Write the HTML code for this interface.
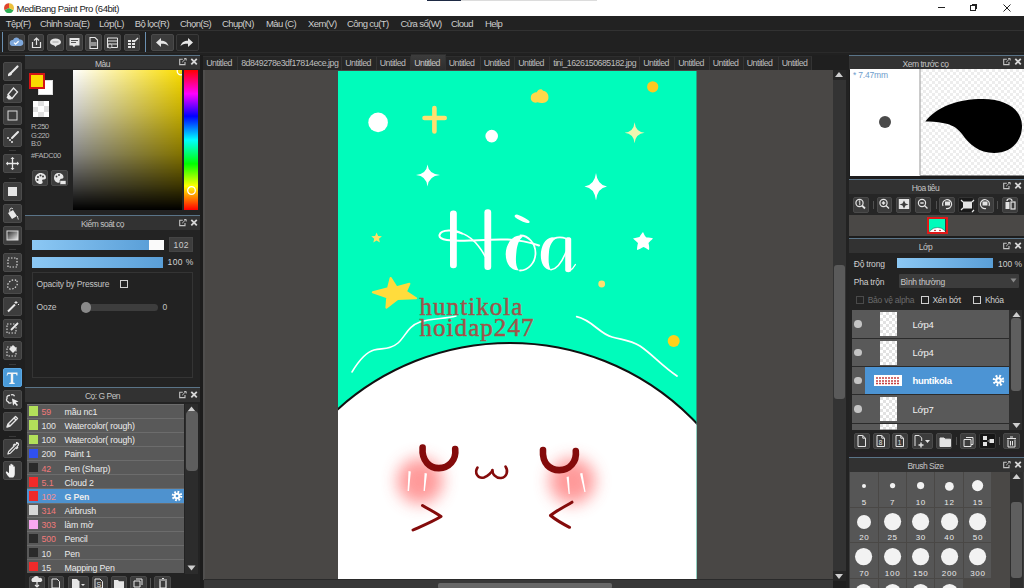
<!DOCTYPE html>
<html><head><meta charset="utf-8">
<style>
*{margin:0;padding:0;box-sizing:border-box}
html,body{width:1024px;height:588px;overflow:hidden;background:#1e1e1e;font-family:"Liberation Sans",sans-serif}
.a{position:absolute}
.t{position:absolute;white-space:nowrap;line-height:1}
svg{position:absolute;overflow:visible}
.btn{position:absolute;background:#3c3c3c;border:1px solid #4a4a4a;border-radius:2px}
.tool{position:absolute;left:3px;width:19px;height:19px;background:#3d3d3d;border:1px solid #4b4b4b;border-radius:2px}
.sep{position:absolute;left:9px;width:7px;height:1px;background:#3a3a3a}
.ph{position:absolute;background:#323232;height:15px;border-top:1px solid #5a7488}
.ph .t{color:#bdbdbd;font-size:8.5px;top:3.5px;letter-spacing:-0.3px}
.pb{position:absolute;background:#222}
</style></head><body>
<div class="a" style="left:0;top:0;width:1024px;height:16px;background:#fff">
<svg style="left:3px;top:2px" width="12" height="12" viewBox="0 0 12 12">
<circle cx="6" cy="6" r="5.2" fill="#f3f3f3"/>
<path d="M6 1.2 A4.8 4.8 0 0 0 1.6 8.2 L6 6Z" fill="#e0452d"/>
<path d="M1.6 8.2 A4.8 4.8 0 0 0 10.4 8.2 L6 6Z" fill="#2fae55"/>
<path d="M10.4 8.2 A4.8 4.8 0 0 0 6 1.2 L6 6Z" fill="#eec13a"/>
</svg>
<div class="t" style="left:16.5px;top:3.5px;font-size:9.5px;color:#1a1a1a;letter-spacing:-0.45px">MediBang Paint Pro (64bit)</div>
<div class="a" style="left:426.5px;top:0;width:35px;height:1px;background:#1e2a44"></div><div class="a" style="left:461px;top:0;width:136px;height:1px;background:#dcdcdc"></div><div class="a" style="left:938px;top:7px;width:7px;height:1px;background:#222"></div>
<div class="a" style="left:970px;top:5px;width:5.5px;height:5.5px;border:1px solid #222"></div>
<div class="a" style="left:971.5px;top:3.5px;width:5.5px;height:5.5px;border-top:1px solid #222;border-right:1px solid #222"></div>
<svg style="left:1002.5px;top:3.5px" width="8" height="8" viewBox="0 0 8 8"><path d="M0.5 0.5L7.5 7.5M7.5 0.5L0.5 7.5" stroke="#222" stroke-width="1"/></svg>
</div>
<div class="a" style="left:0;top:16px;width:1024px;height:14.5px;background:#222"></div>
<div class="t" style="left:5.75px;top:19px;color:#cdcdcd;font-size:9.5px;letter-spacing:-0.6px">Tệp(F)</div>
<div class="t" style="left:40.0px;top:19px;color:#cdcdcd;font-size:9.5px;letter-spacing:-0.6px">Chỉnh sửa(E)</div>
<div class="t" style="left:99.0px;top:19px;color:#cdcdcd;font-size:9.5px;letter-spacing:-0.6px">Lớp(L)</div>
<div class="t" style="left:134.75px;top:19px;color:#cdcdcd;font-size:9.5px;letter-spacing:-0.6px">Bộ lọc(R)</div>
<div class="t" style="left:180.0px;top:19px;color:#cdcdcd;font-size:9.5px;letter-spacing:-0.6px">Chọn(S)</div>
<div class="t" style="left:222.0px;top:19px;color:#cdcdcd;font-size:9.5px;letter-spacing:-0.6px">Chụp(N)</div>
<div class="t" style="left:266.0px;top:19px;color:#cdcdcd;font-size:9.5px;letter-spacing:-0.6px">Màu (C)</div>
<div class="t" style="left:308.0px;top:19px;color:#cdcdcd;font-size:9.5px;letter-spacing:-0.6px">Xem(V)</div>
<div class="t" style="left:347.0px;top:19px;color:#cdcdcd;font-size:9.5px;letter-spacing:-0.6px">Công cụ(T)</div>
<div class="t" style="left:400.5px;top:19px;color:#cdcdcd;font-size:9.5px;letter-spacing:-0.6px">Cửa sổ(W)</div>
<div class="t" style="left:451.0px;top:19px;color:#cdcdcd;font-size:9.5px;letter-spacing:-0.6px">Cloud</div>
<div class="t" style="left:485.0px;top:19px;color:#cdcdcd;font-size:9.5px;letter-spacing:-0.6px">Help</div>
<div class="a" style="left:0;top:30px;width:1024px;height:25px;background:#212121;border-top:1px solid #323232"></div><div class="a" style="left:0;top:51.5px;width:1024px;height:1px;background:#2a2a2a"></div>
<div class="a" style="left:2px;top:32px;width:1px;height:20px;background:#6a8fb0"></div>
<div class="a" style="left:145px;top:32px;width:1px;height:20px;background:#6a8fb0"></div>
<div class="btn" style="left:8.3px;top:33.7px;width:16.5px;height:17px"></div><svg style="left:9.3px;top:34.7px" width="15" height="15" viewBox="0 0 15 15"><path d="M3.5 11 a3 3 0 0 1 0.5-6 a3.5 3.5 0 0 1 6.5-0.5 a2.8 2.8 0 0 1 1 6.5z" fill="#7fa9dd"/><path d="M5 7.6l1.6 1.6 3-3" stroke="#fff" stroke-width="1.3" fill="none"/></svg>
<div class="btn" style="left:27.8px;top:33.7px;width:16.5px;height:17px"></div><svg style="left:28.8px;top:34.7px" width="15" height="15" viewBox="0 0 15 15"><path d="M3.5 7v5.5h8V7" stroke="#e6e6e6" stroke-width="1.2" fill="none"/><path d="M7.5 10V3M5 5.5l2.5-2.5 2.5 2.5" stroke="#e6e6e6" stroke-width="1.2" fill="none"/></svg>
<div class="btn" style="left:47px;top:33.7px;width:16.5px;height:17px"></div><svg style="left:48px;top:34.7px" width="15" height="15" viewBox="0 0 15 15"><ellipse cx="7.5" cy="7" rx="5.5" ry="3.6" fill="#e6e6e6"/><path d="M6 10l1.5 2 1.5-2z" fill="#e6e6e6"/><path d="M4.5 7h6" stroke="#777" stroke-width="0.6"/></svg>
<div class="btn" style="left:66px;top:33.7px;width:16.5px;height:17px"></div><svg style="left:67px;top:34.7px" width="15" height="15" viewBox="0 0 15 15"><path d="M2.5 3h10v7.5h-4l-1.5 1.5-1.5-1.5h-3z" fill="#e6e6e6"/><path d="M4 5.5h7M4 7.5h5" stroke="#555" stroke-width="1"/></svg>
<div class="btn" style="left:85px;top:33.7px;width:16.5px;height:17px"></div><svg style="left:86px;top:34.7px" width="15" height="15" viewBox="0 0 15 15"><path d="M4 2.5h5l2.5 2.5v8.5h-7.5z" stroke="#e6e6e6" stroke-width="1.1" fill="none"/><path d="M5 8h5.5M5 10h5.5" stroke="#e6e6e6" stroke-width="1.2"/></svg>
<div class="btn" style="left:104.1px;top:33.7px;width:16.5px;height:17px"></div><svg style="left:105.1px;top:34.7px" width="15" height="15" viewBox="0 0 15 15"><path d="M2.5 3h10v9.5h-10z" stroke="#e6e6e6" stroke-width="1" fill="none"/><path d="M2.5 6h10M2.5 9h10" stroke="#e6e6e6" stroke-width="1"/><circle cx="5" cy="11" r="2" fill="#3c3c3c" stroke="#e6e6e6" stroke-width="0.8"/></svg>
<div class="btn" style="left:123.8px;top:33.7px;width:16.5px;height:17px"></div><svg style="left:124.8px;top:34.7px" width="15" height="15" viewBox="0 0 15 15"><path d="M3 5h3v2h-3zM7 5h3v2h-3zM3 8h3v2h-3zM7 8h3v2h-3zM3 11h3v2h-3zM7 11h3v2h-3z" fill="#e6e6e6"/><path d="M9 7l4-4" stroke="#e6e6e6" stroke-width="1.2"/></svg>
<div class="btn" style="left:151px;top:33.7px;width:22.5px;height:17px"></div><svg style="left:151px;top:33.7px" width="22" height="17" viewBox="0 0 22 17"><path d="M5 8.5l5-4.5v2.8c4 0 6.5 1.5 7.5 5.5c-1.5-2-3.5-2.5-7.5-2.5v3.2z" fill="#e6e6e6"/></svg>
<div class="btn" style="left:175.8px;top:33.7px;width:23px;height:17px;background:#262626;border-color:#3a3a3a"></div><svg style="left:176px;top:33.7px" width="22" height="17" viewBox="0 0 22 17"><path d="M17 8.5l-5-4.5v2.8c-4 0-6.5 1.5-7.5 5.5c1.5-2 3.5-2.5 7.5-2.5v3.2z" fill="#e6e6e6"/></svg>
<div class="a" style="left:0;top:55px;width:25px;height:533px;background:#1f1f1f;border-top:1px solid #3a3a3a"></div>
<div class="tool" style="top:62px"></div><svg style="left:4px;top:63px" width="17" height="17" viewBox="0 0 17 17"><path d="M13.5 3.5L7 10" stroke="#e8e8e8" stroke-width="2.2" stroke-linecap="round"/><path d="M4 11.5c1-2 2.5-2.8 3.8-1.6c0.8 1.3-0.6 3-3.8 3.3z" fill="#e8e8e8"/></svg>
<div class="tool" style="top:84px"></div><svg style="left:4px;top:85px" width="17" height="17" viewBox="0 0 17 17"><path d="M9.5 3l4 4-5.5 6.5-4-4z" fill="none" stroke="#e8e8e8" stroke-width="1.3"/><path d="M4 9.5l4 4-1 1h-2.5l-2-2z" fill="#e8e8e8"/></svg>
<div class="tool" style="top:106px"></div><svg style="left:4px;top:107px" width="17" height="17" viewBox="0 0 17 17"><rect x="4" y="4" width="9" height="9" fill="none" stroke="#dcdcdc" stroke-width="1"/></svg>
<div class="tool" style="top:128px"></div><svg style="left:4px;top:129px" width="17" height="17" viewBox="0 0 17 17"><path d="M14 3L8 9" stroke="#e8e8e8" stroke-width="2" stroke-linecap="round"/><circle cx="4" cy="9" r="1" fill="#e8e8e8"/><circle cx="6" cy="11" r="1" fill="#e8e8e8"/><circle cx="8" cy="13" r="1" fill="#e8e8e8"/></svg>
<div class="tool" style="top:154px"></div><svg style="left:4px;top:155px" width="17" height="17" viewBox="0 0 17 17"><path d="M8.5 2.5v12M2.5 8.5h12" stroke="#e8e8e8" stroke-width="1.3"/><path d="M8.5 2l-2 2h4zM8.5 15l-2-2h4zM2 8.5l2-2v4zM15 8.5l-2-2v4z" fill="#e8e8e8"/></svg>
<div class="tool" style="top:182px"></div><svg style="left:4px;top:183px" width="17" height="17" viewBox="0 0 17 17"><rect x="4" y="4" width="9" height="9" fill="#e6e6e6"/></svg>
<div class="tool" style="top:204px"></div><svg style="left:4px;top:205px" width="17" height="17" viewBox="0 0 17 17"><path d="M4 8l5-3 4 6-5 3z" fill="#e8e8e8"/><path d="M6 7c-1-3 1-5 3-3" stroke="#e8e8e8" stroke-width="1" fill="none"/><path d="M13.5 11c0 2 1 3 0.8 3.5" stroke="#e8e8e8" stroke-width="1"/></svg>
<div class="tool" style="top:226px"></div><svg style="left:4px;top:227px" width="17" height="17" viewBox="0 0 17 17"><defs><linearGradient id="gg" x1="0" y1="0" x2="1" y2="1"><stop offset="0" stop-color="#222"/><stop offset="1" stop-color="#eee"/></linearGradient></defs><rect x="3" y="4" width="11" height="9" fill="url(#gg)" stroke="#ddd" stroke-width="1"/></svg>
<div class="tool" style="top:253px"></div><svg style="left:4px;top:254px" width="17" height="17" viewBox="0 0 17 17"><rect x="4" y="4" width="9" height="9" fill="none" stroke="#dcdcdc" stroke-width="1.2" stroke-dasharray="1.5 1.5"/></svg>
<div class="tool" style="top:275px"></div><svg style="left:4px;top:276px" width="17" height="17" viewBox="0 0 17 17"><ellipse cx="8.5" cy="8.5" rx="5.5" ry="4" transform="rotate(-40 8.5 8.5)" fill="none" stroke="#dcdcdc" stroke-width="1.2" stroke-dasharray="1.5 1.5"/></svg>
<div class="tool" style="top:297px"></div><svg style="left:4px;top:298px" width="17" height="17" viewBox="0 0 17 17"><path d="M4 13.5l7-7" stroke="#e8e8e8" stroke-width="2"/><path d="M12 3v3M10.5 4.5h3M14 6l1 1" stroke="#e8e8e8" stroke-width="1"/></svg>
<div class="tool" style="top:319px"></div><svg style="left:4px;top:320px" width="17" height="17" viewBox="0 0 17 17"><rect x="3" y="4" width="9" height="9" fill="none" stroke="#dcdcdc" stroke-width="1.1" stroke-dasharray="1.5 1.5"/><path d="M14 3L7 10" stroke="#e8e8e8" stroke-width="1.8"/></svg>
<div class="tool" style="top:341px"></div><svg style="left:4px;top:342px" width="17" height="17" viewBox="0 0 17 17"><rect x="3" y="5" width="9" height="9" fill="none" stroke="#dcdcdc" stroke-width="1.1" stroke-dasharray="1.5 1.5"/><path d="M9 3l4 4-4 4-4-4z" fill="#e8e8e8"/></svg>
<div class="tool" style="top:368px;background:#4a9ad8;border-color:#5aa8e4"></div><svg style="left:4px;top:369px" width="17" height="17" viewBox="0 0 17 17"><path d="M3.5 3.5h10v3h-1l-0.5-1.5h-2.8v8.5l1.5 0.5v1h-5.4v-1l1.5-0.5v-8.5h-2.8l-0.5 1.5h-1z" fill="#f4f4f4"/></svg>
<div class="tool" style="top:390px"></div><svg style="left:4px;top:391px" width="17" height="17" viewBox="0 0 17 17"><path d="M6 4.5c-2-0.5-3.5 1-3 3c-1 1-0.5 3 1 3.2c0.5 1.5 2.5 1.8 3.5 0.8" stroke="#e4e4e4" stroke-width="1.3" fill="none"/><path d="M7 3.8c1.5-0.5 3 0 3.5 1.5" stroke="#e4e4e4" stroke-width="1.3" fill="none"/><path d="M8 7.5l6.5 3-2.8 0.9 2.3 2.6-1.2 1-2.2-2.6-1.6 2.3z" fill="#f0f0f0"/></svg>
<div class="tool" style="top:412px"></div><svg style="left:4px;top:413px" width="17" height="17" viewBox="0 0 17 17"><path d="M11.5 3.5l2 2-7.5 7.5-3 1 1-3z" fill="none" stroke="#e8e8e8" stroke-width="1.4" stroke-linejoin="round"/><path d="M3.5 13.5l1-3 2 2z" fill="#e8e8e8"/><path d="M10 5l2 2" stroke="#e8e8e8" stroke-width="1.2"/></svg>
<div class="tool" style="top:439px"></div><svg style="left:4px;top:440px" width="17" height="17" viewBox="0 0 17 17"><path d="M12.5 2.5c1 0 2 1 2 2c0 0.8-0.5 1.2-1 1.6l-0.6 0.6 0.8 0.8-1 1-0.8-0.8-5.5 5.5-2.5 0.8 0.8-2.5 5.5-5.5-0.8-0.8 1-1 0.8 0.8 0.6-0.6c0.4-0.5 0.8-1 1.6-1z" fill="none" stroke="#e8e8e8" stroke-width="1.2" stroke-linejoin="round"/></svg>
<div class="tool" style="top:461px"></div><svg style="left:4px;top:462px" width="17" height="17" viewBox="0 0 17 17"><path d="M5.5 15.5c-1.2-1.2-3.2-3.6-3.6-4.8c-0.3-0.9 0.6-1.5 1.4-0.9l1.7 1.5v-7.3c0-1 1.4-1 1.4 0v5.2v-6.7c0-1 1.5-1 1.5 0v6.5v-5.8c0-1 1.5-1 1.5 0v6v-4.2c0-1 1.4-1 1.4 0v6.6c0 2.2-0.7 3.2-1.6 3.9z" fill="#f2f2f2"/></svg>
<div class="sep" style="top:150px"></div>
<div class="sep" style="top:177.5px"></div>
<div class="sep" style="top:248.5px"></div>
<div class="sep" style="top:363.8px"></div>
<div class="sep" style="top:435.5px"></div>
<div class="a" style="left:25px;top:55px;width:178px;height:533px;background:#1d1d1d"></div>
<div class="ph" style="left:25px;top:54.5px;width:175px"></div><div class="t" style="left:25px;width:155px;text-align:center;top:59.5px;color:#c4c4c4;font-size:8.5px;letter-spacing:-0.5px">Màu</div><svg style="left:178.5px;top:58.0px" width="18" height="8" viewBox="0 0 18 8"><path d="M3.8 1.3h-3.1v5.3h5.3v-2.6" stroke="#c4c4c4" stroke-width="1.1" fill="none"/><path d="M3.2 4.2l3.8-3.8M5.2 0.5h2v2" stroke="#c4c4c4" stroke-width="1" fill="none"/><path d="M12.3 0.8l5.5 5.5M17.8 0.8l-5.5 5.5" stroke="#d8d8d8" stroke-width="1.8"/></svg>
<div class="a" style="left:25px;top:69px;width:175px;height:146px;background:#232323"></div>
<div class="a" style="left:38px;top:80px;width:15px;height:15px;background:#fff;border:1px solid #ddd"></div><div class="a" style="left:29px;top:73px;width:16px;height:16px;background:#fadc00;border:2px solid #d41515"></div>
<svg style="left:33px;top:101px" width="16" height="16" viewBox="0 0 16 16"><rect width="16" height="16" fill="#fff"/><path d="M5 0h6v5h5v6h-5v5h-6v-5h-5v-5h5z" fill="#e0e0e0"/><rect x="5" y="5" width="6" height="6" fill="#fff"/></svg>
<div class="t" style="left:31px;top:123px;color:#b8b8b8;font-size:7.5px;line-height:8.5px;letter-spacing:-0.5px;white-space:pre">R:250
G:220
B:0</div>
<div class="t" style="left:31px;top:151.5px;color:#b8b8b8;font-size:7.5px;letter-spacing:-0.4px">#FADC00</div>
<div class="btn" style="left:32px;top:170px;width:16px;height:16px"></div><div class="btn" style="left:51px;top:170px;width:16.5px;height:16px"></div><svg style="left:33px;top:171px" width="15" height="15" viewBox="0 0 15 15"><path d="M7.5 2c3.5 0 5.5 2.2 5.5 4.5c0 2-2 2-3 2s-1.2 1-0.5 2s-0.5 2.5-2 2.5c-3 0-5.5-2.5-5.5-5.5s2.5-5.5 5.5-5.5z" fill="#e8e8e8"/><circle cx="5" cy="6" r="1" fill="#3c3c3c"/><circle cx="7.5" cy="4.5" r="1" fill="#3c3c3c"/><circle cx="10" cy="5.5" r="1" fill="#3c3c3c"/><circle cx="4.5" cy="9" r="1" fill="#3c3c3c"/></svg><svg style="left:52px;top:171px" width="15" height="15" viewBox="0 0 15 15"><path d="M6.5 2c3 0 5 2 5 4c0 1.5-1.5 1.8-2.5 1.8s-1 1-0.5 1.8s-0.5 2.2-1.8 2.2c-2.7 0-4.7-2.2-4.7-5s2-4.8 4.5-4.8z" fill="#e8e8e8"/><circle cx="4.5" cy="5.5" r="0.9" fill="#3c3c3c"/><circle cx="7" cy="4" r="0.9" fill="#3c3c3c"/><rect x="8" y="9.5" width="6" height="4" fill="#e8e8e8" stroke="#3c3c3c" stroke-width="0.6"/></svg>
<div class="a" style="left:73px;top:69.5px;width:108.5px;height:140.5px;background:linear-gradient(to bottom,rgba(0,0,0,0) 0%,rgba(0,0,0,0.22) 30%,rgba(0,0,0,0.48) 60%,rgba(0,0,0,0.75) 82%,#000 100%),linear-gradient(to right,#fff,#fadc00)"></div>
<div class="a" style="left:73px;top:69.5px;width:108.5px;height:140.5px;overflow:hidden"><svg style="left:103px;top:-3.5px" width="10" height="10" viewBox="0 0 10 10"><circle cx="5" cy="5" r="3.8" fill="none" stroke="#fff" stroke-width="1.3"/></svg></div>
<div class="a" style="left:183.7px;top:69.5px;width:14.5px;height:140.5px;background:linear-gradient(to bottom,#f00 0%,#f0f 17%,#00f 33%,#0ff 50%,#0f0 67%,#ff0 83%,#f00 100%)"></div>
<svg style="left:185.5px;top:185px" width="11" height="11" viewBox="0 0 11 11"><circle cx="5.5" cy="5.5" r="3.8" fill="none" stroke="#fff" stroke-width="1.3"/></svg>
<div class="ph" style="left:25px;top:215px;width:175px"></div><div class="t" style="left:25px;width:155px;text-align:center;top:220px;color:#c4c4c4;font-size:8.5px;letter-spacing:-0.5px">Kiểm soát cọ</div><svg style="left:178.5px;top:218.5px" width="18" height="8" viewBox="0 0 18 8"><path d="M3.8 1.3h-3.1v5.3h5.3v-2.6" stroke="#c4c4c4" stroke-width="1.1" fill="none"/><path d="M3.2 4.2l3.8-3.8M5.2 0.5h2v2" stroke="#c4c4c4" stroke-width="1" fill="none"/><path d="M12.3 0.8l5.5 5.5M17.8 0.8l-5.5 5.5" stroke="#d8d8d8" stroke-width="1.8"/></svg>
<div class="a" style="left:25px;top:230px;width:175px;height:157px;background:#232323"></div>
<div class="a" style="left:31.5px;top:239.5px;width:118px;height:10.5px;background:linear-gradient(to right,#8cc8f4,#5a9fd8)"></div><div class="a" style="left:149px;top:239.5px;width:14.5px;height:10.5px;background:#fafafa"></div><div class="a" style="left:169.3px;top:237.4px;width:23.7px;height:14.3px;background:#3d3d3d;border:1px solid #444"></div><div class="t" style="left:173.5px;top:241px;color:#cccccc;font-size:8.5px;letter-spacing:0.45px">102</div>
<div class="a" style="left:31.5px;top:256.5px;width:131.5px;height:11.5px;background:linear-gradient(to right,#8cc8f4,#5a9fd8)"></div><div class="t" style="left:167.5px;top:258px;color:#d4d4d4;font-size:8.5px;letter-spacing:0.4px">100 %</div>
<div class="a" style="left:31.5px;top:272px;width:161px;height:106px;border:1px solid #343434;background:#222"></div>
<div class="t" style="left:36.5px;top:279.5px;color:#c4c4c4;font-size:8.5px;letter-spacing:-0.2px">Opacity by Pressure</div><div class="a" style="left:119.5px;top:279.5px;width:8px;height:8.5px;border:1px solid #cfcfcf"></div>
<div class="t" style="left:36.5px;top:303px;color:#c4c4c4;font-size:8.5px;letter-spacing:-0.1px">Ooze</div><div class="a" style="left:81px;top:303.8px;width:77px;height:7.5px;border-radius:4px;background:#3d3d3d"></div><div class="a" style="left:80.5px;top:302px;width:10.5px;height:10.5px;border-radius:50%;background:#8a8a8a"></div><div class="t" style="left:162.5px;top:303px;color:#c4c4c4;font-size:8.5px">0</div>
<div class="ph" style="left:25px;top:387px;width:175px"></div><div class="t" style="left:25px;width:155px;text-align:center;top:392px;color:#c4c4c4;font-size:8.5px;letter-spacing:-0.5px">Cọ: G Pen</div><svg style="left:178.5px;top:390.5px" width="18" height="8" viewBox="0 0 18 8"><path d="M3.8 1.3h-3.1v5.3h5.3v-2.6" stroke="#c4c4c4" stroke-width="1.1" fill="none"/><path d="M3.2 4.2l3.8-3.8M5.2 0.5h2v2" stroke="#c4c4c4" stroke-width="1" fill="none"/><path d="M12.3 0.8l5.5 5.5M17.8 0.8l-5.5 5.5" stroke="#d8d8d8" stroke-width="1.8"/></svg>
<div class="a" style="left:25px;top:402px;width:175px;height:186px;background:#232323"></div>
<div class="a" style="left:26.5px;top:403.50px;width:157.7px;height:14.15px;background:#595959;border-top:1px solid #6c6c6c"></div><div class="a" style="left:29px;top:406.30px;width:9.2px;height:9.5px;background:#b2e05a"></div><div class="t" style="left:41.5px;top:408.00px;color:#f07a7a;font-size:8.8px;letter-spacing:-0.1px">59</div><div class="t" style="left:64.5px;top:408.00px;color:#ececec;font-size:8.8px;font-weight:normal;letter-spacing:-0.15px">mầu nc1</div>
<div class="a" style="left:26.5px;top:417.65px;width:157.7px;height:14.15px;background:#595959;border-top:1px solid #6c6c6c"></div><div class="a" style="left:29px;top:420.45px;width:9.2px;height:9.5px;background:#b2e05a"></div><div class="t" style="left:41.5px;top:422.15px;color:#e4e4e4;font-size:8.8px;letter-spacing:-0.1px">100</div><div class="t" style="left:64.5px;top:422.15px;color:#ececec;font-size:8.8px;font-weight:normal;letter-spacing:-0.15px">Watercolor( rough)</div>
<div class="a" style="left:26.5px;top:431.80px;width:157.7px;height:14.15px;background:#595959;border-top:1px solid #6c6c6c"></div><div class="a" style="left:29px;top:434.60px;width:9.2px;height:9.5px;background:#b2e05a"></div><div class="t" style="left:41.5px;top:436.30px;color:#e4e4e4;font-size:8.8px;letter-spacing:-0.1px">100</div><div class="t" style="left:64.5px;top:436.30px;color:#ececec;font-size:8.8px;font-weight:normal;letter-spacing:-0.15px">Watercolor( rough)</div>
<div class="a" style="left:26.5px;top:445.95px;width:157.7px;height:14.15px;background:#595959;border-top:1px solid #6c6c6c"></div><div class="a" style="left:29px;top:448.75px;width:9.2px;height:9.5px;background:#3050f0"></div><div class="t" style="left:41.5px;top:450.45px;color:#e4e4e4;font-size:8.8px;letter-spacing:-0.1px">200</div><div class="t" style="left:64.5px;top:450.45px;color:#ececec;font-size:8.8px;font-weight:normal;letter-spacing:-0.15px">Paint 1</div>
<div class="a" style="left:26.5px;top:460.10px;width:157.7px;height:14.15px;background:#595959;border-top:1px solid #6c6c6c"></div><div class="a" style="left:29px;top:462.90px;width:9.2px;height:9.5px;background:#2a2a2a"></div><div class="t" style="left:41.5px;top:464.60px;color:#f07a7a;font-size:8.8px;letter-spacing:-0.1px">42</div><div class="t" style="left:64.5px;top:464.60px;color:#ececec;font-size:8.8px;font-weight:normal;letter-spacing:-0.15px">Pen (Sharp)</div>
<div class="a" style="left:26.5px;top:474.25px;width:157.7px;height:14.15px;background:#595959;border-top:1px solid #6c6c6c"></div><div class="a" style="left:29px;top:477.05px;width:9.2px;height:9.5px;background:#f02a2a"></div><div class="t" style="left:41.5px;top:478.75px;color:#f07a7a;font-size:8.8px;letter-spacing:-0.1px">5.1</div><div class="t" style="left:64.5px;top:478.75px;color:#ececec;font-size:8.8px;font-weight:normal;letter-spacing:-0.15px">Cloud 2</div>
<div class="a" style="left:26.5px;top:488.40px;width:157.7px;height:14.15px;background:#4e92cf;border-top:1px solid #6c6c6c"></div><div class="a" style="left:29px;top:491.20px;width:9.2px;height:9.5px;background:#f02a2a"></div><div class="t" style="left:41.5px;top:492.90px;color:#f59090;font-size:8.8px;letter-spacing:-0.1px">102</div><div class="t" style="left:64.5px;top:492.90px;color:#ececec;font-size:8.8px;font-weight:bold;letter-spacing:-0.15px">G Pen</div>
<svg style="left:170.5px;top:489.90px" width="12" height="12" viewBox="0 0 12 12"><circle cx="6" cy="6" r="4" fill="none" stroke="#fff" stroke-width="2.6" stroke-dasharray="1.6 1.54"/><circle cx="6" cy="6" r="3.3" fill="#fff"/><circle cx="6" cy="6" r="1.3" fill="#4e92cf"/></svg>
<div class="a" style="left:26.5px;top:502.55px;width:157.7px;height:14.15px;background:#595959;border-top:1px solid #6c6c6c"></div><div class="a" style="left:29px;top:505.35px;width:9.2px;height:9.5px;background:#d8d8d8"></div><div class="t" style="left:41.5px;top:507.05px;color:#f07a7a;font-size:8.8px;letter-spacing:-0.1px">314</div><div class="t" style="left:64.5px;top:507.05px;color:#ececec;font-size:8.8px;font-weight:normal;letter-spacing:-0.15px">Airbrush</div>
<div class="a" style="left:26.5px;top:516.70px;width:157.7px;height:14.15px;background:#595959;border-top:1px solid #6c6c6c"></div><div class="a" style="left:29px;top:519.50px;width:9.2px;height:9.5px;background:#f8a8f0"></div><div class="t" style="left:41.5px;top:521.20px;color:#f07a7a;font-size:8.8px;letter-spacing:-0.1px">303</div><div class="t" style="left:64.5px;top:521.20px;color:#ececec;font-size:8.8px;font-weight:normal;letter-spacing:-0.15px">làm mờ</div>
<div class="a" style="left:26.5px;top:530.85px;width:157.7px;height:14.15px;background:#595959;border-top:1px solid #6c6c6c"></div><div class="a" style="left:29px;top:533.65px;width:9.2px;height:9.5px;background:#2a2a2a"></div><div class="t" style="left:41.5px;top:535.35px;color:#f07a7a;font-size:8.8px;letter-spacing:-0.1px">500</div><div class="t" style="left:64.5px;top:535.35px;color:#ececec;font-size:8.8px;font-weight:normal;letter-spacing:-0.15px">Pencil</div>
<div class="a" style="left:26.5px;top:545.00px;width:157.7px;height:14.15px;background:#595959;border-top:1px solid #6c6c6c"></div><div class="a" style="left:29px;top:547.80px;width:9.2px;height:9.5px;background:#2a2a2a"></div><div class="t" style="left:41.5px;top:549.50px;color:#e4e4e4;font-size:8.8px;letter-spacing:-0.1px">10</div><div class="t" style="left:64.5px;top:549.50px;color:#ececec;font-size:8.8px;font-weight:normal;letter-spacing:-0.15px">Pen</div>
<div class="a" style="left:26.5px;top:559.15px;width:157.7px;height:14.15px;background:#595959;border-top:1px solid #6c6c6c"></div><div class="a" style="left:29px;top:561.95px;width:9.2px;height:9.5px;background:#f02a2a"></div><div class="t" style="left:41.5px;top:563.65px;color:#e4e4e4;font-size:8.8px;letter-spacing:-0.1px">15</div><div class="t" style="left:64.5px;top:563.65px;color:#ececec;font-size:8.8px;font-weight:normal;letter-spacing:-0.15px">Mapping Pen</div>
<div class="a" style="left:185px;top:403.5px;width:13px;height:170px;background:#2c2c2c"></div><svg style="left:186px;top:405px" width="11" height="8" viewBox="0 0 11 8"><path d="M5.5 1.5l4 5h-8z" fill="#cfcfcf"/></svg><div class="a" style="left:185.5px;top:411px;width:12px;height:60px;border-radius:4px;background:#5e5e5e"></div><svg style="left:186px;top:564px" width="11" height="8" viewBox="0 0 11 8"><path d="M5.5 6.5l4-5h-8z" fill="#cfcfcf"/></svg>
<div class="btn" style="left:29.3px;top:576px;width:15.7px;height:16px"></div><div class="btn" style="left:48.2px;top:576px;width:16.3px;height:16px"></div><div class="btn" style="left:67.9px;top:576px;width:20.8px;height:16px"></div><div class="btn" style="left:92px;top:576px;width:16px;height:16px"></div><div class="btn" style="left:111px;top:576px;width:16px;height:16px"></div><div class="btn" style="left:130.4px;top:576px;width:16.6px;height:16px"></div><div class="btn" style="left:154px;top:576px;width:16.7px;height:16px"></div><div class="a" style="left:150px;top:578px;width:1px;height:10px;background:#555"></div>
<svg style="left:29px;top:576px" width="160" height="12" viewBox="0 0 160 12"><path d="M3.5 6a2.5 2.5 0 0 1 1-4.5a3 3 0 0 1 5.5 0.5a2 2 0 0 1 2 4z" fill="#e6e6e6"/><path d="M8 5v6M6 9l2 2 2-2" stroke="#e6e6e6" stroke-width="1.2" fill="none"/><path d="M23 3h5l2.5 2.5v6.5h-7.5z" fill="none" stroke="#e6e6e6" stroke-width="1"/><path d="M43 3h5l2.5 2.5v6.5h-7.5z" fill="#e6e6e6"/><path d="M52 8l2 2 2-2z" fill="#e6e6e6"/><path d="M66 3h5l2.5 2.5v6.5h-7.5z" fill="none" stroke="#e6e6e6" stroke-width="1"/><text x="67.5" y="11" font-size="7" fill="#e6e6e6" font-family="Liberation Sans">S</text><path d="M85 4h4l1 1.2h5v6.8h-10z" fill="#e6e6e6"/><path d="M105 5h6v6h-6zM107 3h6v6" fill="none" stroke="#e6e6e6" stroke-width="1"/><path d="M130 4h8M131 5v7h6v-7" fill="none" stroke="#e6e6e6" stroke-width="1.2"/><path d="M133 2.5h2" stroke="#e6e6e6"/></svg>
<div class="a" style="left:200px;top:55px;width:3px;height:533px;background:#1c1c1c"></div>
<div class="a" style="left:203px;top:55px;width:646px;height:533px;background:#1f1f1f"></div>
<div class="a" style="left:203px;top:55.5px;width:34.5px;height:14.0px;background:#262626;border-right:1px solid #333;border-top:1px solid #2e2e2e"></div><div class="t" style="left:206.2px;top:59px;color:#bdbdbd;font-size:8.8px;letter-spacing:-0.5px">Untitled</div>
<div class="a" style="left:238px;top:55.5px;width:104px;height:14.0px;background:#262626;border-right:1px solid #333;border-top:1px solid #2e2e2e"></div><div class="t" style="left:241.2px;top:59px;color:#bdbdbd;font-size:8.8px;letter-spacing:-0.5px">8d849278e3df17814ece.jpg</div>
<div class="a" style="left:342px;top:55.5px;width:34.5px;height:14.0px;background:#262626;border-right:1px solid #333;border-top:1px solid #2e2e2e"></div><div class="t" style="left:345.2px;top:59px;color:#bdbdbd;font-size:8.8px;letter-spacing:-0.5px">Untitled</div>
<div class="a" style="left:376.5px;top:55.5px;width:34.5px;height:14.0px;background:#262626;border-right:1px solid #333;border-top:1px solid #2e2e2e"></div><div class="t" style="left:379.7px;top:59px;color:#bdbdbd;font-size:8.8px;letter-spacing:-0.5px">Untitled</div>
<div class="a" style="left:411px;top:53.5px;width:34.5px;height:16.0px;background:linear-gradient(#3c3c3c,#2e2e2e);border-right:1px solid #333;border-top:1px solid #2e2e2e"></div><div class="t" style="left:414.2px;top:58.5px;color:#c8c8c8;font-size:8.8px;letter-spacing:-0.5px">Untitled</div>
<div class="a" style="left:445.5px;top:55.5px;width:35.0px;height:14.0px;background:#262626;border-right:1px solid #333;border-top:1px solid #2e2e2e"></div><div class="t" style="left:448.7px;top:59px;color:#bdbdbd;font-size:8.8px;letter-spacing:-0.5px">Untitled</div>
<div class="a" style="left:480.5px;top:55.5px;width:34.5px;height:14.0px;background:#262626;border-right:1px solid #333;border-top:1px solid #2e2e2e"></div><div class="t" style="left:483.7px;top:59px;color:#bdbdbd;font-size:8.8px;letter-spacing:-0.5px">Untitled</div>
<div class="a" style="left:515px;top:55.5px;width:35px;height:14.0px;background:#262626;border-right:1px solid #333;border-top:1px solid #2e2e2e"></div><div class="t" style="left:518.2px;top:59px;color:#bdbdbd;font-size:8.8px;letter-spacing:-0.5px">Untitled</div>
<div class="a" style="left:550px;top:55.5px;width:90px;height:14.0px;background:#262626;border-right:1px solid #333;border-top:1px solid #2e2e2e"></div><div class="t" style="left:553.2px;top:59px;color:#bdbdbd;font-size:8.8px;letter-spacing:-0.5px">tini_1626150685182.jpg</div>
<div class="a" style="left:640px;top:55.5px;width:35px;height:14.0px;background:#262626;border-right:1px solid #333;border-top:1px solid #2e2e2e"></div><div class="t" style="left:643.2px;top:59px;color:#bdbdbd;font-size:8.8px;letter-spacing:-0.5px">Untitled</div>
<div class="a" style="left:675px;top:55.5px;width:34.5px;height:14.0px;background:#262626;border-right:1px solid #333;border-top:1px solid #2e2e2e"></div><div class="t" style="left:678.2px;top:59px;color:#bdbdbd;font-size:8.8px;letter-spacing:-0.5px">Untitled</div>
<div class="a" style="left:709.5px;top:55.5px;width:34.0px;height:14.0px;background:#262626;border-right:1px solid #333;border-top:1px solid #2e2e2e"></div><div class="t" style="left:712.7px;top:59px;color:#bdbdbd;font-size:8.8px;letter-spacing:-0.5px">Untitled</div>
<div class="a" style="left:743.5px;top:55.5px;width:35.0px;height:14.0px;background:#262626;border-right:1px solid #333;border-top:1px solid #2e2e2e"></div><div class="t" style="left:746.7px;top:59px;color:#bdbdbd;font-size:8.8px;letter-spacing:-0.5px">Untitled</div>
<div class="a" style="left:778.5px;top:55.5px;width:33.5px;height:14.0px;background:#262626;border-right:1px solid #333;border-top:1px solid #2e2e2e"></div><div class="t" style="left:781.7px;top:59px;color:#bdbdbd;font-size:8.8px;letter-spacing:-0.5px">Untitled</div>
<div class="a" style="left:202.5px;top:69.5px;width:630.5px;height:510px;background:#494745;border-left:2px solid #4f4e4d"></div>
<div class="a" style="left:832.5px;top:69.5px;width:13px;height:511px;background:#333"></div><div class="a" style="left:832.5px;top:69.5px;width:13px;height:10px;background:#262626"></div><svg style="left:834px;top:71px" width="10" height="7" viewBox="0 0 10 7"><path d="M5 1l4 5h-8z" fill="#cfcfcf"/></svg><div class="a" style="left:833.5px;top:264.5px;width:11.5px;height:134px;border-radius:3px;background:#5a5a5a"></div><div class="a" style="left:832.5px;top:571px;width:13px;height:10px;background:#262626"></div><svg style="left:834px;top:573px" width="10" height="7" viewBox="0 0 10 7"><path d="M5 6l4-5h-8z" fill="#cfcfcf"/></svg>
<div class="a" style="left:845.5px;top:69.5px;width:3.5px;height:519px;background:#222"></div>
<div class="a" style="left:204px;top:579px;width:629px;height:9px;background:#383838;border-top:1px solid #2a2a2a"></div><div class="a" style="left:437.5px;top:582.5px;width:174px;height:6px;border-radius:2px;background:#676767"></div>
<svg style="left:338px;top:71px" width="359" height="508" viewBox="338 71 359 508">
<defs>
<clipPath id="cc"><rect x="338" y="71" width="358.5" height="508"/></clipPath>
<filter id="bl" x="-80%" y="-80%" width="260%" height="260%"><feGaussianBlur stdDeviation="8"/></filter>
</defs>
<g clip-path="url(#cc)">
<rect x="338" y="71" width="359" height="508" fill="#00fcbb"/>
<circle cx="378.1" cy="122.4" r="9.8" fill="#fff"/>
<circle cx="491.7" cy="136.1" r="6.3" fill="#fff"/>
<path d="M434.4 108v23.5M424.5 118h20.2" stroke="#ffe070" stroke-width="4.6" stroke-linecap="round"/>
<path d="M530.8 97.5 C531 93.5 534.5 92.5 536.8 92.3 C538 89 541.5 88.3 543 90.8 C546.5 91 549 94.5 548.4 98.5 C547.8 102.8 542 104 537.5 102.3 C534 103.5 530.6 101.5 530.8 97.5Z" fill="#ffd84a"/>
<circle cx="652.7" cy="86.8" r="5.6" fill="#ffc820"/>
<path d="M427.5 164.5 Q428.5 174.0 440.0 175 Q428.5 176.0 427.5 186.5 Q426.5 176.0 416.0 175 Q426.5 174.0 427.5 164.5z" fill="#fff"/>
<path d="M634.6 122.19999999999999 Q635.5 131.79999999999998 644.6 132.7 Q635.5 133.6 634.6 143.2 Q633.7 133.6 624.6 132.7 Q633.7 131.79999999999998 634.6 122.19999999999999z" fill="#f0f6b0"/>
<path d="M596 173.1 Q597.4 185.2 607 186.6 Q597.4 188.0 596 200.6 Q594.6 188.0 584.5 186.6 Q594.6 185.2 596 173.1z" fill="#fff"/>
<path d="M376.6 232.5l1.5 3.5 3.8 0.3-2.9 2.4 0.9 3.7-3.3-2-3.3 2 0.9-3.7-2.9-2.4 3.8-0.3z" fill="#ffe066"/>
<path d="M643 232c1 2 2 4.5 3.5 5.5c2.5 0 5 0 6.5 1c-1.5 1.5-3.5 3-4.5 4.5c0.5 2.5 1 5 0.5 7c-2-1-4-2.5-5.5-3c-2 1-4.5 2.5-6.5 3c0-2.5 0.5-5 1-7c-1.5-1.5-3.5-3-5-4.5c2-0.5 4.5-1 6.5-1.5c1-2 2.5-4 3.5-5z" fill="#fff"/>
<circle cx="601.7" cy="284" r="3.4" fill="#ffe070"/>
<circle cx="673.7" cy="341" r="6" fill="#ffd21a"/>
<path d="M390.6 277.9 L396.6 287.2 L409.4 283.8 L406 291.5 L416.2 298.3 L397.4 299.1 L386.4 307.7 L387.2 297.4 L372.8 292.3 L388.1 288.1 Z" fill="#ffdc3c" stroke="#ffdc3c" stroke-width="2" stroke-linejoin="round"/>
<g fill="none" stroke="#fff" stroke-linecap="round">
<path d="M352 372 C358 362 366 352 374 350 C382 348 390 350 398 343 C405 337 408 326 420 322 C432 318 445 319 456 316" stroke-width="1.6"/>
<path d="M576.7 316.7 C592 320 600 334 612 337 C622 340 630 340 640 346 C652 354 662 366 677 376" stroke-width="1.8"/>
</g>
<g font-family="Liberation Serif" font-size="25px" fill="#a0544a" stroke="#a0544a" stroke-width="0.45" letter-spacing="1.05">
<text x="419.5" y="315.3">huntikola</text>
<text x="419.5" y="335.8">hoidap247</text>
</g>
<circle cx="510" cy="600" r="257" fill="#fff" stroke="#111" stroke-width="2"/>
<g fill="#fff">
<rect x="450" y="210.4" width="6.8" height="57.8" rx="3.2"/>
<rect x="484.4" y="209.2" width="6.8" height="60.7" rx="3.2"/>
<path d="M514.8 217 C514 214.5 517 214 519 215.3 C523 217 527 219 529.3 221 C530.5 223 528.5 223.5 526 222.8 C522 221.5 517.5 219.5 514.8 217Z"/>
<path d="M520 235.6 C510.5 236 505.7 246 505.7 254 C505.7 263.5 510.5 270.3 519 270.5 C515 266 515.8 258 516.4 252 C517 246 518.5 240 523 236.5 Z"/>
<path d="M552 237.3 C545 238 540.8 247 540.8 255 C540.8 263 544 269.9 551 270 C548 265.5 548.5 258 549 252 C549.5 246 551.5 241 557 238 Z"/>
<path d="M565.2 239 C565.2 237 571.2 236.5 571.2 239 L571.2 270 C571.2 273 565.2 273 565.2 270 Z"/>
</g>
<g fill="none" stroke="#fff" stroke-linecap="round" stroke-linejoin="round">
<path d="M462 233.5 C455 229.5 441 229 439.5 235 C438.5 240 450 241.5 470 240.5 C482 240 496 239 508 239.6 C522 240.3 530 242.5 539 245.5" stroke-width="2"/>
<path d="M456 232 C466 233 476 240 485 256" stroke-width="1.7"/>
<path d="M520.5 235.5 C528 235.5 535.5 243 535.5 253 C535.5 263 528 270.5 520 270.5" stroke-width="1.8"/>
<path d="M549 241.5 C553 237.5 560 236.3 566 238.5" stroke-width="1.8"/>
<path d="M551 269.8 C557 269 562 262 566 252" stroke-width="1.6"/>
<path d="M570 270.5 C572 269.5 574 267 575.4 264.5" stroke-width="1.4"/>
</g>
</g>
<g filter="url(#bl)" fill="#ff8f8f" opacity="0.9">
<circle cx="420" cy="481" r="23"/>
<circle cx="572.2" cy="481" r="23"/>
</g>
<g fill="#fff">
<path d="M408.5 471 L410.8 471.5 L409 491 L407.6 491z"/><path d="M424.6 473 L427 473.5 L424.8 491 L423.6 491z"/>
<path d="M566.6 477 L568.8 476.5 L569.8 494 L568.6 494z"/><path d="M580 473.5 L582.4 473 L585.6 492 L584.4 492z"/>
</g>
<g fill="none" stroke="#840b0b" stroke-linecap="round" stroke-linejoin="round">
<path d="M422.6 447.5 C421.5 461 430 468.3 439 468.1 C449 468 456.5 460 455.2 449" stroke-width="6.6"/>
<path d="M543 450 C542 464 550.5 470.3 559.5 470.1 C569.5 470 577 462 575.8 451" stroke-width="6.6"/>
<path d="M477.5 467.5 C474 473 478 479 484 477.5 C488 476 492 472 492.5 470 C492 474 496 478.5 501 478 C507 477 508.5 471 505.5 466.5" stroke-width="2.6"/>
<path d="M422.5 505.5 C430 510 436 513 441 516.5 C432 522 422 526 413 530" stroke-width="3"/>
<path d="M572 502.2 C564 507 556 511 550.5 515.5 C556 520 563 524 569.5 527.3" stroke-width="3"/>
</g>
</svg>
<div class="a" style="left:849px;top:55px;width:175px;height:533px;background:#1d1d1d"></div>
<div class="ph" style="left:849px;top:54.5px;width:175px"></div><div class="t" style="left:849px;width:153px;text-align:center;top:59.5px;color:#c4c4c4;font-size:8.5px;letter-spacing:-0.5px">Xem trước cọ</div><svg style="left:1002.5px;top:58.0px" width="18" height="8" viewBox="0 0 18 8"><path d="M3.8 1.3h-3.1v5.3h5.3v-2.6" stroke="#c4c4c4" stroke-width="1.1" fill="none"/><path d="M3.2 4.2l3.8-3.8M5.2 0.5h2v2" stroke="#c4c4c4" stroke-width="1" fill="none"/><path d="M12.3 0.8l5.5 5.5M17.8 0.8l-5.5 5.5" stroke="#d8d8d8" stroke-width="1.8"/></svg>
<div class="a" style="left:850px;top:69px;width:69.5px;height:106.5px;background:#fff"></div><svg style="left:919.5px;top:69px" width="104.5" height="106.5" viewBox="0 0 104.5 106.5"><defs><pattern id="ck" width="6" height="6" patternUnits="userSpaceOnUse"><rect width="6" height="6" fill="#fff"/><rect width="3" height="3" fill="#ededed"/><rect x="3" y="3" width="3" height="3" fill="#ededed"/></pattern></defs><rect width="104.5" height="106.5" fill="url(#ck)"/><path d="M0 0v106.5" stroke="#a8a8a8" stroke-width="1.2"/></svg>
<div class="t" style="left:853px;top:71px;color:#6d9ccc;font-size:8.5px;letter-spacing:-0.2px">* 7.47mm</div><div class="a" style="left:878.5px;top:115.7px;width:12.6px;height:12.6px;border-radius:50%;background:#4a4a4a"></div>
<svg style="left:919px;top:69px" width="105" height="107" viewBox="919 69 105 107"><path d="M925.4 121.5 C937 107 957 99 983 99 C1008 99 1022 111 1022 126 C1022 143 1009 153 994 153 C979 153 969 144 962 134 C956 126 948 121.8 925.4 121.5 Z" fill="#000"/></svg>
<div class="a" style="left:849px;top:175.5px;width:175px;height:3.5px;background:#1d1d1d"></div><div class="ph" style="left:849px;top:178.8px;width:175px"></div><div class="t" style="left:849px;width:153px;text-align:center;top:183.8px;color:#c4c4c4;font-size:8.5px;letter-spacing:-0.5px">Hoa tiêu</div><svg style="left:1002.5px;top:182.3px" width="18" height="8" viewBox="0 0 18 8"><path d="M3.8 1.3h-3.1v5.3h5.3v-2.6" stroke="#c4c4c4" stroke-width="1.1" fill="none"/><path d="M3.2 4.2l3.8-3.8M5.2 0.5h2v2" stroke="#c4c4c4" stroke-width="1" fill="none"/><path d="M12.3 0.8l5.5 5.5M17.8 0.8l-5.5 5.5" stroke="#d8d8d8" stroke-width="1.8"/></svg>
<div class="a" style="left:849px;top:193.5px;width:175px;height:21.5px;background:#262626"></div><div class="btn" style="left:853.4px;top:196.9px;width:15.2px;height:15.7px;"></div><div class="btn" style="left:877.3px;top:196.9px;width:15px;height:15.7px;"></div><div class="btn" style="left:896.2px;top:196.9px;width:15.2px;height:15.7px;"></div><div class="btn" style="left:915.3px;top:196.9px;width:15.7px;height:15.7px;"></div><div class="btn" style="left:939.4px;top:196.9px;width:15.7px;height:15.7px;"></div><div class="btn" style="left:958.3px;top:196.9px;width:16.1px;height:15.7px;background:#1a1a1a;border-color:#333"></div><div class="btn" style="left:977.9px;top:196.9px;width:15.7px;height:15.7px;"></div><div class="btn" style="left:1002px;top:196.9px;width:16px;height:15.7px;"></div><div class="a" style="left:872.6px;top:201px;width:1px;height:8px;background:#505050"></div><div class="a" style="left:935.6px;top:201px;width:1px;height:8px;background:#505050"></div><div class="a" style="left:997.4px;top:201px;width:1px;height:8px;background:#505050"></div><svg style="left:849px;top:193px" width="175" height="22" viewBox="849 193 175 22"><g fill="none" stroke="#e4e4e4" stroke-width="1.2"><circle cx="859.5" cy="203" r="3.6"/><path d="M862 205.5l3 3" stroke-width="1.8"/><path d="M858.8 201.5l1-0.8v4.5" stroke-width="1"/><circle cx="883.5" cy="203" r="3.6"/><path d="M886 205.5l3 3M881.8 203h3.4M883.5 201.3v3.4" stroke-width="1.4"/><rect x="898.8" y="199" width="10.4" height="10" fill="#e4e4e4" stroke="none"/><path d="M904 200.5l1.5 3 3 1-3 1-1.5 3-1.5-3-3-1 3-1z" fill="#3c3c3c" stroke="none"/><circle cx="922" cy="203" r="3.6"/><path d="M924.5 205.5l3 3M920.3 203h3.4" stroke-width="1.4"/><path d="M943 206a4.5 4.5 0 1 1 3 2.5"/><rect x="945" y="201.5" width="5" height="4" fill="#e4e4e4" stroke="none"/><path d="M961 200l2 2M974 200l-2 2M961 210l2-2M974 210l-2 2"/><rect x="963" y="201.5" width="9" height="7" fill="#e4e4e4" stroke="none"/><path d="M989 206a4.5 4.5 0 1 0-3 2.5"/><rect x="982.5" y="201.5" width="5" height="4" fill="#e4e4e4" stroke="none"/><rect x="1005.5" y="202" width="4" height="7" fill="#e4e4e4" stroke="none"/><rect x="1011" y="202" width="4" height="7"/><path d="M1007 201c0-3 5-3 5 0"/></g></svg>
<div class="a" style="left:849px;top:215px;width:175px;height:20.5px;background:#4a4846"></div><div class="a" style="left:926.8px;top:216.6px;width:21px;height:17.8px;border:2px solid #e01818;background:#00fcbb;overflow:hidden"><svg style="left:0;top:0" width="17" height="13.8" viewBox="0 0 17 13.8"><circle cx="8.5" cy="18.5" r="10" fill="#fff" stroke="#222" stroke-width="0.4"/><circle cx="6" cy="11.5" r="0.8" fill="#a00"/><circle cx="11" cy="11.5" r="0.8" fill="#a00"/><rect x="16" y="0" width="1" height="13.8" fill="#3a3a3a"/></svg></div><div class="a" style="left:849px;top:235.5px;width:175px;height:2.5px;background:#1d1d1d"></div><div class="ph" style="left:849px;top:238.1px;width:175px"></div><div class="t" style="left:849px;width:153px;text-align:center;top:243.1px;color:#c4c4c4;font-size:8.5px;letter-spacing:-0.5px">Lớp</div><svg style="left:1002.5px;top:241.6px" width="18" height="8" viewBox="0 0 18 8"><path d="M3.8 1.3h-3.1v5.3h5.3v-2.6" stroke="#c4c4c4" stroke-width="1.1" fill="none"/><path d="M3.2 4.2l3.8-3.8M5.2 0.5h2v2" stroke="#c4c4c4" stroke-width="1" fill="none"/><path d="M12.3 0.8l5.5 5.5M17.8 0.8l-5.5 5.5" stroke="#d8d8d8" stroke-width="1.8"/></svg>
<div class="a" style="left:849px;top:253px;width:175px;height:199px;background:#232323"></div><div class="t" style="left:853.7px;top:259.5px;color:#cfcfcf;font-size:8.5px;letter-spacing:-0.2px">Độ trong</div><div class="a" style="left:896.6px;top:257.7px;width:96px;height:10.5px;background:linear-gradient(to right,#8cc8f4,#5a9fd8)"></div><div class="t" style="left:998px;top:259.5px;color:#d0d0d0;font-size:8.5px">100 %</div>
<div class="t" style="left:853.7px;top:277.5px;color:#cfcfcf;font-size:8.5px;letter-spacing:-0.2px">Pha trộn</div><div class="a" style="left:898.8px;top:273.5px;width:120.7px;height:14.3px;background:#3c3c3c;border-radius:1px"></div><div class="t" style="left:900.5px;top:277.5px;color:#c8c8c8;font-size:8.5px;letter-spacing:-0.3px">Bình thường</div><svg style="left:1010px;top:278px" width="7" height="5" viewBox="0 0 7 5"><path d="M0.5 0.5h6l-3 4z" fill="#8a8a8a"/></svg>
<div class="a" style="left:856.4px;top:296px;width:8px;height:8px;border:1px solid #4a4a4a"></div><div class="t" style="left:867.7px;top:296px;color:#6a6a6a;font-size:8.5px;letter-spacing:-0.25px">Bảo vệ alpha</div>
<div class="a" style="left:921px;top:296px;width:8px;height:8px;border:1px solid #cfcfcf"></div><div class="t" style="left:932.4px;top:296px;color:#cfcfcf;font-size:8.5px;letter-spacing:-0.25px">Xén bớt</div>
<div class="a" style="left:973px;top:296px;width:8px;height:8px;border:1px solid #cfcfcf"></div><div class="t" style="left:984.9px;top:296px;color:#cfcfcf;font-size:8.5px;letter-spacing:-0.25px">Khóa</div>
<div class="a" style="left:852px;top:310px;width:156.5px;height:120px;background:#2b2b2b"></div><div class="a" style="left:852px;top:310px;width:156.5px;height:27.5px;background:#595959"></div><div class="a" style="left:854.3px;top:320px;width:7.6px;height:7.6px;border-radius:50%;background:#c4c4c4"></div><svg style="left:880px;top:312px" width="17" height="24" viewBox="0 0 17 24"><defs><pattern id="lc" width="6" height="6" patternUnits="userSpaceOnUse"><rect width="6" height="6" fill="#fff"/><rect width="3" height="3" fill="#e2e2e2"/><rect x="3" y="3" width="3" height="3" fill="#e2e2e2"/></pattern></defs><rect width="17" height="24" fill="url(#lc)"/></svg><div class="t" style="left:912.5px;top:319.5px;color:#f0f0f0;font-size:9.5px;letter-spacing:-0.3px">Lớp4</div>
<div class="a" style="left:852px;top:338.5px;width:156.5px;height:27.5px;background:#595959"></div><div class="a" style="left:854.3px;top:348.5px;width:7.6px;height:7.6px;border-radius:50%;background:#c4c4c4"></div><svg style="left:880px;top:340.5px" width="17" height="24" viewBox="0 0 17 24"><defs><pattern id="lc" width="6" height="6" patternUnits="userSpaceOnUse"><rect width="6" height="6" fill="#fff"/><rect width="3" height="3" fill="#e2e2e2"/><rect x="3" y="3" width="3" height="3" fill="#e2e2e2"/></pattern></defs><rect width="17" height="24" fill="url(#lc)"/></svg><div class="t" style="left:912.5px;top:348.0px;color:#f0f0f0;font-size:9.5px;letter-spacing:-0.3px">Lớp4</div>
<div class="a" style="left:852px;top:366.5px;width:156.5px;height:27.5px;background:#595959"></div><div class="a" style="left:865px;top:366.5px;width:143.5px;height:27.5px;background:#4c94d4"></div><div class="a" style="left:854.3px;top:376.5px;width:7.6px;height:7.6px;border-radius:50%;background:#c4c4c4"></div><svg style="left:874px;top:374.5px" width="28" height="11" viewBox="0 0 28 11"><rect width="28" height="11" fill="#fff"/><path d="M2 3h24M2 6h24M2 8.5h24" stroke="#c84040" stroke-width="1.4" stroke-dasharray="2 1"/></svg><div class="t" style="left:912.5px;top:376.0px;color:#fff;font-size:9.5px;font-weight:bold;letter-spacing:-0.35px">huntikola</div><svg style="left:992px;top:374.0px" width="13" height="13" viewBox="0 0 13 13"><circle cx="6.5" cy="6.5" r="4.3" fill="none" stroke="#fff" stroke-width="3" stroke-dasharray="1.7 1.7"/><circle cx="6.5" cy="6.5" r="3.3" fill="#fff"/><circle cx="6.5" cy="6.5" r="1.2" fill="#4c94d4"/></svg>
<div class="a" style="left:852px;top:395px;width:156.5px;height:27.5px;background:#595959"></div><div class="a" style="left:854.3px;top:405px;width:7.6px;height:7.6px;border-radius:50%;background:#c4c4c4"></div><svg style="left:880px;top:397px" width="17" height="24" viewBox="0 0 17 24"><defs><pattern id="lc" width="6" height="6" patternUnits="userSpaceOnUse"><rect width="6" height="6" fill="#fff"/><rect width="3" height="3" fill="#e2e2e2"/><rect x="3" y="3" width="3" height="3" fill="#e2e2e2"/></pattern></defs><rect width="17" height="24" fill="url(#lc)"/></svg><div class="t" style="left:912.5px;top:404.5px;color:#f0f0f0;font-size:9.5px;letter-spacing:-0.3px">Lớp7</div>
<div class="a" style="left:852px;top:423.5px;width:156.5px;height:6.5px;background:#595959"></div><svg style="left:880px;top:423.5px" width="17" height="5.5" viewBox="0 0 17 5.5"><defs><pattern id="lc" width="6" height="6" patternUnits="userSpaceOnUse"><rect width="6" height="6" fill="#fff"/><rect width="3" height="3" fill="#e2e2e2"/><rect x="3" y="3" width="3" height="3" fill="#e2e2e2"/></pattern></defs><rect width="17" height="5.5" fill="url(#lc)"/></svg><div class="a" style="left:1009.3px;top:310px;width:13px;height:120px;background:#2e2e2e"></div><svg style="left:1010.5px;top:311px" width="11" height="7" viewBox="0 0 11 7"><path d="M5.5 1l4 5h-8z" fill="#cfcfcf"/></svg><div class="a" style="left:1010.5px;top:318px;width:10.5px;height:72.7px;border-radius:3px;background:#5e5e5e"></div><svg style="left:1010.5px;top:422px" width="11" height="7" viewBox="0 0 11 7"><path d="M5.5 6l4-5h-8z" fill="#cfcfcf"/></svg>
<div class="btn" style="left:854px;top:432.8px;width:16.3px;height:16.6px;"></div><div class="btn" style="left:873px;top:432.8px;width:16.6px;height:16.6px;"></div><div class="btn" style="left:892.2px;top:432.8px;width:16.1px;height:16.6px;"></div><div class="btn" style="left:911.8px;top:432.8px;width:21px;height:16.6px;"></div><div class="btn" style="left:936px;top:432.8px;width:15.6px;height:16.6px;"></div><div class="btn" style="left:960px;top:432.8px;width:16px;height:16.6px;"></div><div class="btn" style="left:979.3px;top:432.8px;width:16.4px;height:16.6px;background:#161616;border-color:#333"></div><div class="btn" style="left:1003.2px;top:432.8px;width:16.6px;height:16.6px;"></div><div class="a" style="left:956px;top:437px;width:1px;height:8px;background:#505050"></div><div class="a" style="left:999px;top:437px;width:1px;height:8px;background:#505050"></div><svg style="left:849px;top:432px" width="175" height="18" viewBox="849 432 175 18"><g fill="none" stroke="#e4e4e4" stroke-width="1"><path d="M858 435.5h4.8l2.7 2.7v8.3h-7.5z M862.8 435.5v2.7h2.7"/><path d="M877 435.5h4.8l2.7 2.7v8.3h-7.5z M881.8 435.5v2.7h2.7"/><path d="M896 435.5h4.8l2.7 2.7v8.3h-7.5z M900.8 435.5v2.7h2.7"/><path d="M915 446v-10.5h4.2l2.5 2.5v3"/><path d="M921 442.5v5M918.5 445h5" stroke-width="1.4"/><path d="M940 438h4l1 1.2h5.5v7.3h-10.5z" fill="#e4e4e4"/><path d="M964 439.5h7v7h-7zM966 437.5h7v7h-2"/><path d="M983 436h4v4h-4zM983 442h4v4h-4zM989.5 439h4.5v4h-4.5z" fill="#e4e4e4" stroke="none"/><path d="M987.5 441h2" stroke-width="0.8"/><path d="M1007 438.5h9M1008 439.5v7.5h7v-7.5M1010 437h3M1010.5 441v4.5M1012.5 441v4.5"/></g><text x="878.8" y="444.8" font-size="6.5" fill="#e4e4e4" font-family="Liberation Sans">8</text><text x="897.8" y="444.8" font-size="6.5" fill="#e4e4e4" font-family="Liberation Sans">1</text><path d="M925 440l2.5 3 2.5-3z" fill="#e4e4e4"/></svg>
<div class="a" style="left:849px;top:452px;width:175px;height:5.5px;background:#262226"></div><div class="ph" style="left:849px;top:457.3px;width:175px"></div><div class="t" style="left:849px;width:153px;text-align:center;top:462.3px;color:#c4c4c4;font-size:8.5px;letter-spacing:-0.5px">Brush Size</div><svg style="left:1002.5px;top:460.8px" width="18" height="8" viewBox="0 0 18 8"><path d="M3.8 1.3h-3.1v5.3h5.3v-2.6" stroke="#c4c4c4" stroke-width="1.1" fill="none"/><path d="M3.2 4.2l3.8-3.8M5.2 0.5h2v2" stroke="#c4c4c4" stroke-width="1" fill="none"/><path d="M12.3 0.8l5.5 5.5M17.8 0.8l-5.5 5.5" stroke="#d8d8d8" stroke-width="1.8"/></svg>
<div class="a" style="left:849px;top:472px;width:175px;height:116px;background:#3a3a3a"></div><div class="a" style="left:850px;top:472px;width:160px;height:116px;background:#4a4846"></div><div class="a" style="left:850.2px;top:472.3px;width:27.5px;height:34.5px;background:#565656"></div><svg style="left:860.95px;top:483px" width="6" height="6" viewBox="0 0 6 6"><circle cx="3" cy="3" r="2" fill="#f2f2f2"/></svg><div class="t" style="left:850.2px;width:27.5px;text-align:center;top:498.5px;color:#eaeaea;font-size:8px;letter-spacing:0.7px;text-indent:0.7px">5</div><div class="a" style="left:878.5px;top:472.3px;width:27.5px;height:34.5px;background:#565656"></div><svg style="left:888.65px;top:482.4px" width="7.2" height="7.2" viewBox="0 0 7.2 7.2"><circle cx="3.6" cy="3.6" r="2.6" fill="#f2f2f2"/></svg><div class="t" style="left:878.5px;width:27.5px;text-align:center;top:498.5px;color:#eaeaea;font-size:8px;letter-spacing:0.7px;text-indent:0.7px">7</div><div class="a" style="left:906.7px;top:472.3px;width:27.5px;height:34.5px;background:#565656"></div><svg style="left:915.85px;top:481.4px" width="9.2" height="9.2" viewBox="0 0 9.2 9.2"><circle cx="4.6" cy="4.6" r="3.6" fill="#f2f2f2"/></svg><div class="t" style="left:906.7px;width:27.5px;text-align:center;top:498.5px;color:#eaeaea;font-size:8px;letter-spacing:0.7px;text-indent:0.7px">10</div><div class="a" style="left:935.4px;top:472.3px;width:27.5px;height:34.5px;background:#565656"></div><svg style="left:943.75px;top:480.6px" width="10.8" height="10.8" viewBox="0 0 10.8 10.8"><circle cx="5.4" cy="5.4" r="4.4" fill="#f2f2f2"/></svg><div class="t" style="left:935.4px;width:27.5px;text-align:center;top:498.5px;color:#eaeaea;font-size:8px;letter-spacing:0.7px;text-indent:0.7px">12</div><div class="a" style="left:963.8px;top:472.3px;width:27.5px;height:34.5px;background:#565656"></div><svg style="left:970.9499999999999px;top:479.4px" width="13.2" height="13.2" viewBox="0 0 13.2 13.2"><circle cx="6.6" cy="6.6" r="5.6" fill="#f2f2f2"/></svg><div class="t" style="left:963.8px;width:27.5px;text-align:center;top:498.5px;color:#eaeaea;font-size:8px;letter-spacing:0.7px;text-indent:0.7px">15</div>
<div class="a" style="left:850.2px;top:507.8px;width:27.5px;height:34.5px;background:#565656"></div><svg style="left:855.95px;top:513.5px" width="16" height="16" viewBox="0 0 16 16"><circle cx="8" cy="8" r="7" fill="#f2f2f2"/></svg><div class="t" style="left:850.2px;width:27.5px;text-align:center;top:534px;color:#eaeaea;font-size:8px;letter-spacing:0.7px;text-indent:0.7px">20</div><div class="a" style="left:878.5px;top:507.8px;width:27.5px;height:34.5px;background:#565656"></div><svg style="left:882.65px;top:511.9px" width="19.2" height="19.2" viewBox="0 0 19.2 19.2"><circle cx="9.6" cy="9.6" r="8.6" fill="#f2f2f2"/></svg><div class="t" style="left:878.5px;width:27.5px;text-align:center;top:534px;color:#eaeaea;font-size:8px;letter-spacing:0.7px;text-indent:0.7px">25</div><div class="a" style="left:906.7px;top:507.8px;width:27.5px;height:34.5px;background:#565656"></div><svg style="left:910.85px;top:511.9px" width="19.2" height="19.2" viewBox="0 0 19.2 19.2"><circle cx="9.6" cy="9.6" r="8.6" fill="#f2f2f2"/></svg><div class="t" style="left:906.7px;width:27.5px;text-align:center;top:534px;color:#eaeaea;font-size:8px;letter-spacing:0.7px;text-indent:0.7px">30</div><div class="a" style="left:935.4px;top:507.8px;width:27.5px;height:34.5px;background:#565656"></div><svg style="left:939.55px;top:511.9px" width="19.2" height="19.2" viewBox="0 0 19.2 19.2"><circle cx="9.6" cy="9.6" r="8.6" fill="#f2f2f2"/></svg><div class="t" style="left:935.4px;width:27.5px;text-align:center;top:534px;color:#eaeaea;font-size:8px;letter-spacing:0.7px;text-indent:0.7px">40</div><div class="a" style="left:963.8px;top:507.8px;width:27.5px;height:34.5px;background:#565656"></div><svg style="left:967.9499999999999px;top:511.9px" width="19.2" height="19.2" viewBox="0 0 19.2 19.2"><circle cx="9.6" cy="9.6" r="8.6" fill="#f2f2f2"/></svg><div class="t" style="left:963.8px;width:27.5px;text-align:center;top:534px;color:#eaeaea;font-size:8px;letter-spacing:0.7px;text-indent:0.7px">50</div>
<div class="a" style="left:850.2px;top:543.3px;width:27.5px;height:34.5px;background:#565656"></div><svg style="left:854.35px;top:547.4px" width="19.2" height="19.2" viewBox="0 0 19.2 19.2"><circle cx="9.6" cy="9.6" r="8.6" fill="#f2f2f2"/></svg><div class="t" style="left:850.2px;width:27.5px;text-align:center;top:569.8px;color:#eaeaea;font-size:8px;letter-spacing:0.7px;text-indent:0.7px">70</div><div class="a" style="left:878.5px;top:543.3px;width:27.5px;height:34.5px;background:#565656"></div><svg style="left:882.65px;top:547.4px" width="19.2" height="19.2" viewBox="0 0 19.2 19.2"><circle cx="9.6" cy="9.6" r="8.6" fill="#f2f2f2"/></svg><div class="t" style="left:878.5px;width:27.5px;text-align:center;top:569.8px;color:#eaeaea;font-size:8px;letter-spacing:0.7px;text-indent:0.7px">100</div><div class="a" style="left:906.7px;top:543.3px;width:27.5px;height:34.5px;background:#565656"></div><svg style="left:910.85px;top:547.4px" width="19.2" height="19.2" viewBox="0 0 19.2 19.2"><circle cx="9.6" cy="9.6" r="8.6" fill="#f2f2f2"/></svg><div class="t" style="left:906.7px;width:27.5px;text-align:center;top:569.8px;color:#eaeaea;font-size:8px;letter-spacing:0.7px;text-indent:0.7px">150</div><div class="a" style="left:935.4px;top:543.3px;width:27.5px;height:34.5px;background:#565656"></div><svg style="left:939.55px;top:547.4px" width="19.2" height="19.2" viewBox="0 0 19.2 19.2"><circle cx="9.6" cy="9.6" r="8.6" fill="#f2f2f2"/></svg><div class="t" style="left:935.4px;width:27.5px;text-align:center;top:569.8px;color:#eaeaea;font-size:8px;letter-spacing:0.7px;text-indent:0.7px">200</div><div class="a" style="left:963.8px;top:543.3px;width:27.5px;height:34.5px;background:#565656"></div><svg style="left:967.9499999999999px;top:547.4px" width="19.2" height="19.2" viewBox="0 0 19.2 19.2"><circle cx="9.6" cy="9.6" r="8.6" fill="#f2f2f2"/></svg><div class="t" style="left:963.8px;width:27.5px;text-align:center;top:569.8px;color:#eaeaea;font-size:8px;letter-spacing:0.7px;text-indent:0.7px">300</div>
<div class="a" style="left:850.2px;top:578.8px;width:27.5px;height:34.5px;background:#565656"></div><svg style="left:854.35px;top:582.9px" width="19.2" height="19.2" viewBox="0 0 19.2 19.2"><circle cx="9.6" cy="9.6" r="8.6" fill="#f2f2f2"/></svg><div class="a" style="left:878.5px;top:578.8px;width:27.5px;height:34.5px;background:#565656"></div><svg style="left:882.65px;top:582.9px" width="19.2" height="19.2" viewBox="0 0 19.2 19.2"><circle cx="9.6" cy="9.6" r="8.6" fill="#f2f2f2"/></svg><div class="a" style="left:906.7px;top:578.8px;width:27.5px;height:34.5px;background:#565656"></div><svg style="left:910.85px;top:582.9px" width="19.2" height="19.2" viewBox="0 0 19.2 19.2"><circle cx="9.6" cy="9.6" r="8.6" fill="#f2f2f2"/></svg><div class="a" style="left:935.4px;top:578.8px;width:27.5px;height:34.5px;background:#565656"></div><svg style="left:939.55px;top:582.9px" width="19.2" height="19.2" viewBox="0 0 19.2 19.2"><circle cx="9.6" cy="9.6" r="8.6" fill="#f2f2f2"/></svg>
<div class="a" style="left:1010.3px;top:472px;width:12.5px;height:116px;background:#2e2e2e"></div><svg style="left:1011px;top:473px" width="11" height="7" viewBox="0 0 11 7"><path d="M5.5 1l4 5h-8z" fill="#cfcfcf"/></svg><div class="a" style="left:1010.8px;top:501.6px;width:11px;height:76.5px;border-radius:3px;background:#5e5e5e"></div>
</body></html>
